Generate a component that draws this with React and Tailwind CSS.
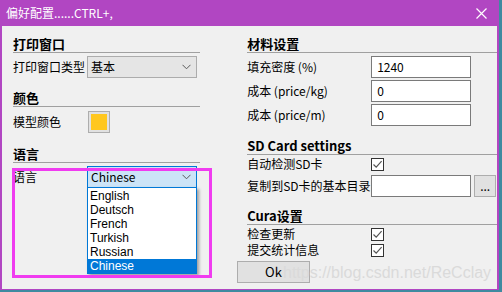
import React from "react";

function Heading({ children, className = "" }) {
  return (
    <div
      className={
        "h-[21px] border-b border-[#a0a0a0] text-[13px] font-bold leading-[24px] text-black whitespace-nowrap " +
        className
      }
    >
      {children}
    </div>
  );
}

function Chevron() {
  return (
    <svg width="9" height="6" viewBox="0 0 9 6" className="shrink-0">
      <path d="M0.5 0.8 L4.5 4.8 L8.5 0.8" fill="none" stroke="#5a5a5a" strokeWidth="1" />
    </svg>
  );
}

function Check() {
  return (
    <div className="w-[13px] h-[13px] border border-[#333333] bg-white flex items-center justify-center">
      <svg width="11" height="11" viewBox="0 0 11 11">
        <path d="M1.5 5.5 L4.2 8.2 L9.6 2.2" fill="none" stroke="#555" strokeWidth="1.2" />
      </svg>
    </div>
  );
}

function Input({ value }) {
  return (
    <div className="w-[100px] h-[22px] border border-[#7a7a7a] bg-white px-[5px] leading-[20px] text-[12px]">
      {value}
    </div>
  );
}

export default function App() {
  const langs = ["English", "Deutsch", "French", "Turkish", "Russian", "Chinese"];
  return (
    <div className="relative w-[502px] h-[292px] overflow-hidden bg-[#3f8aa0] font-['Noto_Sans_CJK_SC','Noto_Sans',sans-serif] text-[12px] text-black">
      <div className="w-[499px] h-[290px] flex flex-col border-x-2 border-b border-[#b146c2]">
        {/* title bar */}
        <div className="h-[26px] bg-[#b146c2] flex items-center justify-between pl-[4px] pr-[10px] shrink-0">
          <span className="text-white text-[12px] leading-[26px]">偏好配置......CTRL+,</span>
          <svg width="11" height="11" viewBox="0 0 11 11">
            <path d="M0.5 0.5 L10.5 10.5 M10.5 0.5 L0.5 10.5" stroke="white" strokeWidth="1.2" />
          </svg>
        </div>
        {/* body */}
        <div className="flex-1 bg-[#f0f0f0] flex flex-col">
          <div className="flex">
            {/* left column */}
            <div className="ml-[11px] w-[188px] flex flex-col">
              <Heading className="mt-[6px]">打印窗口</Heading>
              <div className="mt-[3px] h-[22px] flex items-center">
                <span className="w-[74px] whitespace-nowrap">打印窗口类型</span>
                <div className="w-[110px] h-[22px] bg-[#e5e5e5] border border-[#acacac] flex items-center justify-between pl-[3px] pr-[5px]">
                  <span>基本</span>
                  <Chevron />
                </div>
              </div>
              <Heading className="mt-[8px]">颜色</Heading>
              <div className="mt-[4px] h-[22px] flex items-center">
                <span className="w-[75px] whitespace-nowrap">模型颜色</span>
                <div className="w-[22px] h-[22px] border border-[#adadad] bg-[#e1e1e1] p-[2px]">
                  <div className="w-full h-full bg-[#ffc71e]" />
                </div>
              </div>
              <Heading className="mt-[9px]">语言</Heading>
              <div className="mt-[3px] h-[22px] flex items-center">
                <span className="w-[74px] whitespace-nowrap">语言</span>
                <div className="w-[110px] h-[22px] bg-[#cce4f7] border border-[#0078d7] flex items-center justify-between pl-[3px] pr-[5px]">
                  <span>Chinese</span>
                  <Chevron />
                </div>
              </div>
            </div>
            {/* right column */}
            <div className="ml-[47px] w-[251px] flex flex-col">
              <Heading className="mt-[6px]">材料设置</Heading>
              <div className="mt-[3px] h-[22px] flex items-center">
                <span className="w-[124px] whitespace-nowrap">填充密度 (%)</span>
                <Input value="1240" />
              </div>
              <div className="mt-[2px] h-[22px] flex items-center">
                <span className="w-[124px] whitespace-nowrap">成本 (price/kg)</span>
                <Input value="0" />
              </div>
              <div className="mt-[2px] h-[22px] flex items-center">
                <span className="w-[124px] whitespace-nowrap">成本 (price/m)</span>
                <Input value="0" />
              </div>
              <Heading className="mt-[8px]">SD Card settings</Heading>
              <div className="h-[18px] flex items-center">
                <span className="w-[124px] whitespace-nowrap">自动检测SD卡</span>
                <Check />
              </div>
              <div className="mt-[2px] h-[22px] flex items-center">
                <span className="w-[124px] whitespace-nowrap">复制到SD卡的基本目录</span>
                <Input value="" />
                <div className="ml-[3px] w-[22px] h-[22px] bg-[#e1e1e1] border border-[#adadad] flex items-center justify-center leading-none">
                  ...
                </div>
              </div>
              <Heading className="mt-[7px]">Cura设置</Heading>
              <div className="mt-[1px] h-[16px] flex items-center">
                <span className="w-[124px] whitespace-nowrap">检查更新</span>
                <Check />
              </div>
              <div className="h-[16px] flex items-center">
                <span className="w-[124px] whitespace-nowrap">提交统计信息</span>
                <Check />
              </div>
            </div>
          </div>
          <div className="mt-[3px] pl-[235px]">
            <div className="w-[73px] h-[22px] bg-[#e1e1e1] border border-[#adadad] flex items-center justify-center text-[13px]">
              Ok
            </div>
          </div>
        </div>
      </div>

      {/* dropdown list */}
      <div className="absolute left-[87px] top-[187px] w-[110px] border border-[#0078d7] bg-white shadow-[2px_2px_3px_rgba(0,0,0,0.35)] pt-[1px] font-['Liberation_Sans',Arial,sans-serif]">
        {langs.map((l) => (
          <div
            key={l}
            className={
              "h-[14px] leading-[14px] pl-[2px] text-[12px] " +
              (l === "Chinese" ? "bg-[#0078d7] text-white" : "text-black")
            }
          >
            {l}
          </div>
        ))}
      </div>

      {/* magenta annotation */}
      <div className="absolute left-[12px] top-[168px] w-[200px] h-[110px] border-[3px] border-[#f03cf0] pointer-events-none" />

      {/* watermark */}
      <div className="absolute left-[283px] top-[263px] font-['Liberation_Sans',Arial,sans-serif] text-[16px] leading-[20px] text-[#dadada] whitespace-nowrap pointer-events-none">
        https://blog.csdn.net/ReCclay
      </div>
    </div>
  );
}
